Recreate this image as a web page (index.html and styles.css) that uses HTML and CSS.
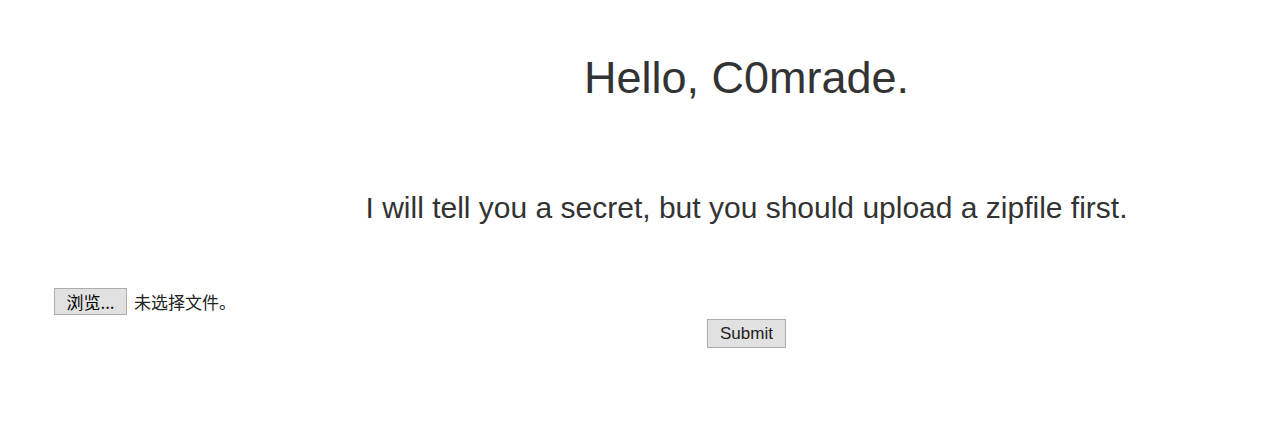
FILE: index.html
```html
<!DOCTYPE html>
<html>
<head>
<meta charset="utf-8">
<link rel="stylesheet" href="styles.css">
<title>Hello</title>
</head>
<body>
<div class="page">
  <div class="hero">
    <h1 class="title">Hello, C0mrade.</h1>
    <p class="lead">I will tell you a secret, but you should upload a zipfile first.</p>
  </div>
  <form class="upload">
    <div class="file-row">
      <span class="file-btn">浏览...</span>
      <span class="file-label">未选择文件。</span>
    </div>
    <div class="submit-row">
      <button type="button" class="submit">Submit</button>
    </div>
  </form>
</div>
</body>
</html>
```
FILE: styles.css
```css
html, body {
  margin: 0;
  padding: 0;
  background: #fff;
}
body {
  font-family: "Liberation Sans", Arial, sans-serif;
  color: #333;
}
.page {
  padding-top: 48px;
}
.hero {
  padding-left: 224px;
  text-align: center;
}
.title {
  margin: 0;
  font-size: 45px;
  font-weight: normal;
  line-height: 60px;
}
.lead {
  margin: 80px 0 0;
  font-size: 30px;
  line-height: 40px;
}
.upload {
  margin-top: 60px;
}
.file-row {
  display: flex;
  align-items: center;
  gap: 7px;
  padding-left: 54px;
  font-family: "Noto Sans CJK SC", "Liberation Sans", sans-serif;
  font-size: 17px;
}
.file-btn {
  display: inline-block;
  box-sizing: border-box;
  width: 73px;
  height: 27px;
  line-height: 25px;
  text-align: center;
  background: #e1e1e1;
  border: 1px solid #adadad;
  color: #000;
}
.file-label {
  color: #222;
}
.submit-row {
  padding-left: 224px;
  text-align: center;
  margin-top: 4px;
}
.submit {
  box-sizing: border-box;
  width: 79px;
  height: 29px;
  padding: 0;
  font-family: "Liberation Sans", Arial, sans-serif;
  font-size: 17px;
  color: #222;
  background: #e1e1e1;
  border: 1px solid #adadad;
  border-radius: 0;
}
```
